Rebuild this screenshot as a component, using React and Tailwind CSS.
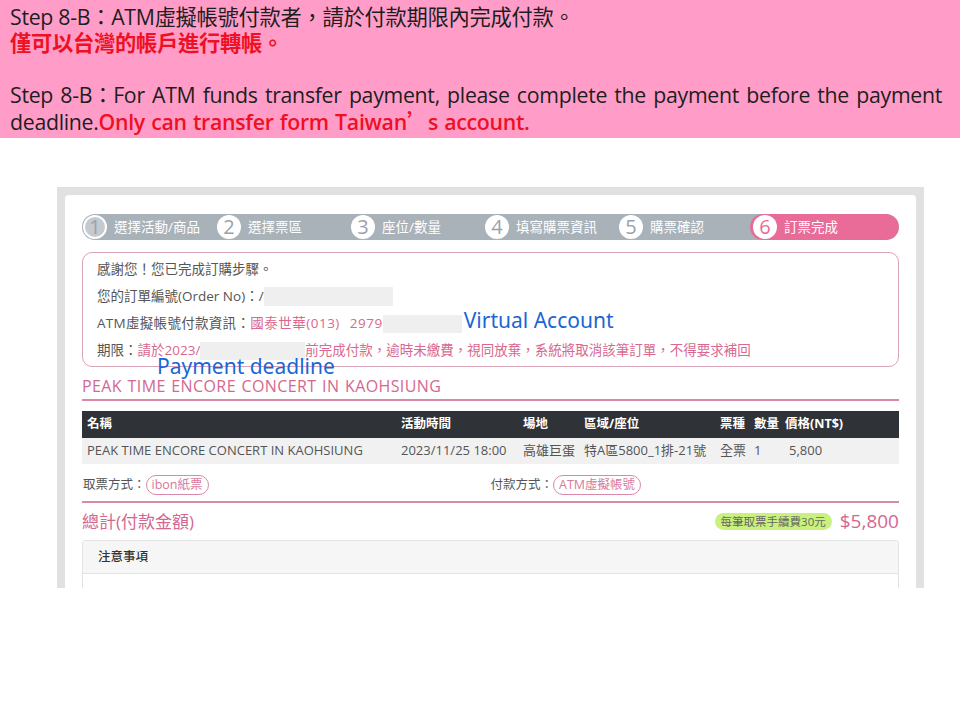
import React from "react";

const CJK = "font-['Open_Sans','Noto_Sans_CJK_TC',sans-serif]";

const steps = [
  { n: "1", label: "選擇活動/商品" },
  { n: "2", label: "選擇票區" },
  { n: "3", label: "座位/數量" },
  { n: "4", label: "填寫購票資訊" },
  { n: "5", label: "購票確認" },
  { n: "6", label: "訂票完成", active: true },
];

const cols = ["名稱", "活動時間", "場地", "區域/座位", "票種", "數量", "價格(NT$)"];
const row = ["PEAK TIME ENCORE CONCERT IN KAOHSIUNG", "2023/11/25 18:00", "高雄巨蛋", "特A區5800_1排-21號", "全票", "1", "5,800"];

const StepBar = () => (
  <div className="h-[26px] rounded-full bg-[#a9b1b9] grid grid-cols-[repeat(5,134px)_1fr] overflow-hidden">
    {steps.map((s, i) => (
      <div
        key={s.n}
        className={
          "flex items-center gap-[7px] pl-[1px] " +
          (s.active ? "bg-[#e96c98] rounded-full -ml-[2px] pl-[3px]" : "")
        }
      >
        <div
          className={
            "w-[24px] h-[24px] rounded-full flex items-center justify-center text-[20px] leading-none " +
            (i === 0
              ? "border-[2px] border-white bg-[#c4cad0] text-[#9aa2aa]"
              : s.active
              ? "bg-white text-[#e96c98]"
              : "bg-white text-[#9aa2aa]")
          }
        >
          {s.n}
        </div>
        <span className="text-white text-[13.5px]">{s.label}</span>
      </div>
    ))}
  </div>
);

const Pill = ({ children }) => (
  <span className="inline-flex items-center h-[20px] px-[5px] rounded-full border border-[#d98aa7] text-[#d8799c] text-[12.5px]">
    {children}
  </span>
);

export default function App() {
  return (
    <div className={"w-[960px] h-[720px] bg-white " + CJK}>
      {/* banner */}
      <div className="h-[138px] bg-[#ff9dc8] pl-[10px] pt-[4px] text-[21.3px] leading-[26px] text-[#1e1e1e] tracking-[-0.3px]">
        <div>Step 8-B：ATM虛擬帳號付款者，請於付款期限內完成付款。</div>
        <div className="text-[#ee1023] font-bold">僅可以台灣的帳戶進行轉帳。</div>
        <div className="h-[26px]" />
        <div className="whitespace-nowrap [word-spacing:2px]">
          Step 8-B：For ATM funds transfer payment, please complete the payment before the payment
        </div>
        <div>
          deadline.
          <span className="text-[#ee1023] font-semibold [word-spacing:1px]">
            Only can transfer form Taiwan<span className="font-['Noto_Sans_CJK_TC']">’</span>s account.
          </span>
        </div>
      </div>

      {/* screenshot frame */}
      <div className="mt-[49px] ml-[57px] w-[867px] h-[401px] bg-[#e1e1e1] pt-[8px] px-[8px] overflow-hidden">
        <div className="bg-white rounded-t-[4px] h-full px-[17px] pt-[19px] text-[#555]">
          <StepBar />

          {/* info box */}
          <div className="relative mt-[12px] border border-[#d9a3b8] rounded-[10px] px-[14px] pt-[3px] pb-[2px] text-[13.5px] leading-[27px]">
            <div>感謝您！您已完成訂購步驟。</div>
            <div className="flex items-center">
              <span>您的訂單編號(Order No)：/</span>
              <span className="inline-block w-[129px] h-[19px] bg-[#efefef]" />
            </div>
            <div className="flex items-center">
              <span className="tracking-[0.3px]">ATM虛擬帳號付款資訊：</span>
              <span className="text-[#d8688f] tracking-[0.5px] [word-spacing:6px]">國泰世華(013) 2979</span>
              <span className="inline-block w-[79px] h-[18px] bg-[#efefef]" />
              <span className="ml-[2px] -mt-[6px] text-[#1a66d6] text-[21px] leading-[27px] font-['Noto_Sans',sans-serif]">
                Virtual Account
              </span>
            </div>
            <div className="flex items-center">
              <span>期限：</span>
              <span className="text-[#d8688f]">請於2023/</span>
              <span className="inline-block w-[105px] h-[18px] bg-[#efefef]" />
              <span className="text-[#d8688f]">前完成付款，逾時未繳費，視同放棄，系統將取消該筆訂單，不得要求補回</span>
            </div>
            <div className="absolute left-[74px] top-[101px] text-[#1a66d6] text-[21px] leading-[24px] font-['Noto_Sans',sans-serif]">
              Payment deadline
            </div>
          </div>

          {/* title */}
          <div className="mt-[9px] text-[16px] leading-[20px] tracking-[0.4px] [word-spacing:1px] text-[#d4678f] pb-[3px] border-b-[2px] border-[#d88aa6]">
            PEAK TIME ENCORE CONCERT IN KAOHSIUNG
          </div>

          {/* table */}
          <div className="mt-[10px] text-[12.5px]">
            <div className="grid grid-cols-[314px_122px_61px_136px_34px_31px_1fr] pl-[5px] h-[27px] items-center bg-[#2f3237] text-white font-bold">
              {cols.map((c) => (
                <span key={c}>{c}</span>
              ))}
            </div>
            <div className="grid grid-cols-[314px_122px_61px_136px_34px_31px_1fr] pl-[5px] h-[26px] items-center bg-[#f1f1f1] text-[#555] text-[13px]">
              {row.map((c, i) => (
                <span key={i} className={i === 6 ? "pl-[4px]" : ""}>
                  {c}
                </span>
              ))}
            </div>
          </div>

          {/* pickup / payment */}
          <div className="grid grid-cols-2 h-[39px] pt-[5px] items-center text-[12.5px] border-b-[2px] border-[#d88aa6]">
            <div className="flex items-center pl-[1px]">
              <span>取票方式：</span>
              <Pill>ibon紙票</Pill>
            </div>
            <div className="flex items-center">
              <span>付款方式：</span>
              <Pill>ATM虛擬帳號</Pill>
            </div>
          </div>

          {/* total */}
          <div className="flex items-center h-[37px]">
            <span className="text-[17px] text-[#d4678f]">總計(付款金額)</span>
            <span className="ml-auto inline-flex items-center h-[17px] px-[6px] rounded-full bg-[#c9f27c] text-[11.5px] text-[#666]">
              每筆取票手續費30元
            </span>
            <span className="ml-[8px] text-[19px] text-[#d4678f]">$5,800</span>
          </div>

          {/* notice */}
          <div className="border border-[#e3e3e3] rounded-t-[3px]">
            <div className="h-[33px] bg-[#f6f6f6] border-b border-[#e3e3e3] flex items-center pl-[15px] text-[12.5px] text-[#333] font-medium">
              注意事項
            </div>
            <div className="h-[60px]" />
          </div>
        </div>
      </div>
    </div>
  );
}
